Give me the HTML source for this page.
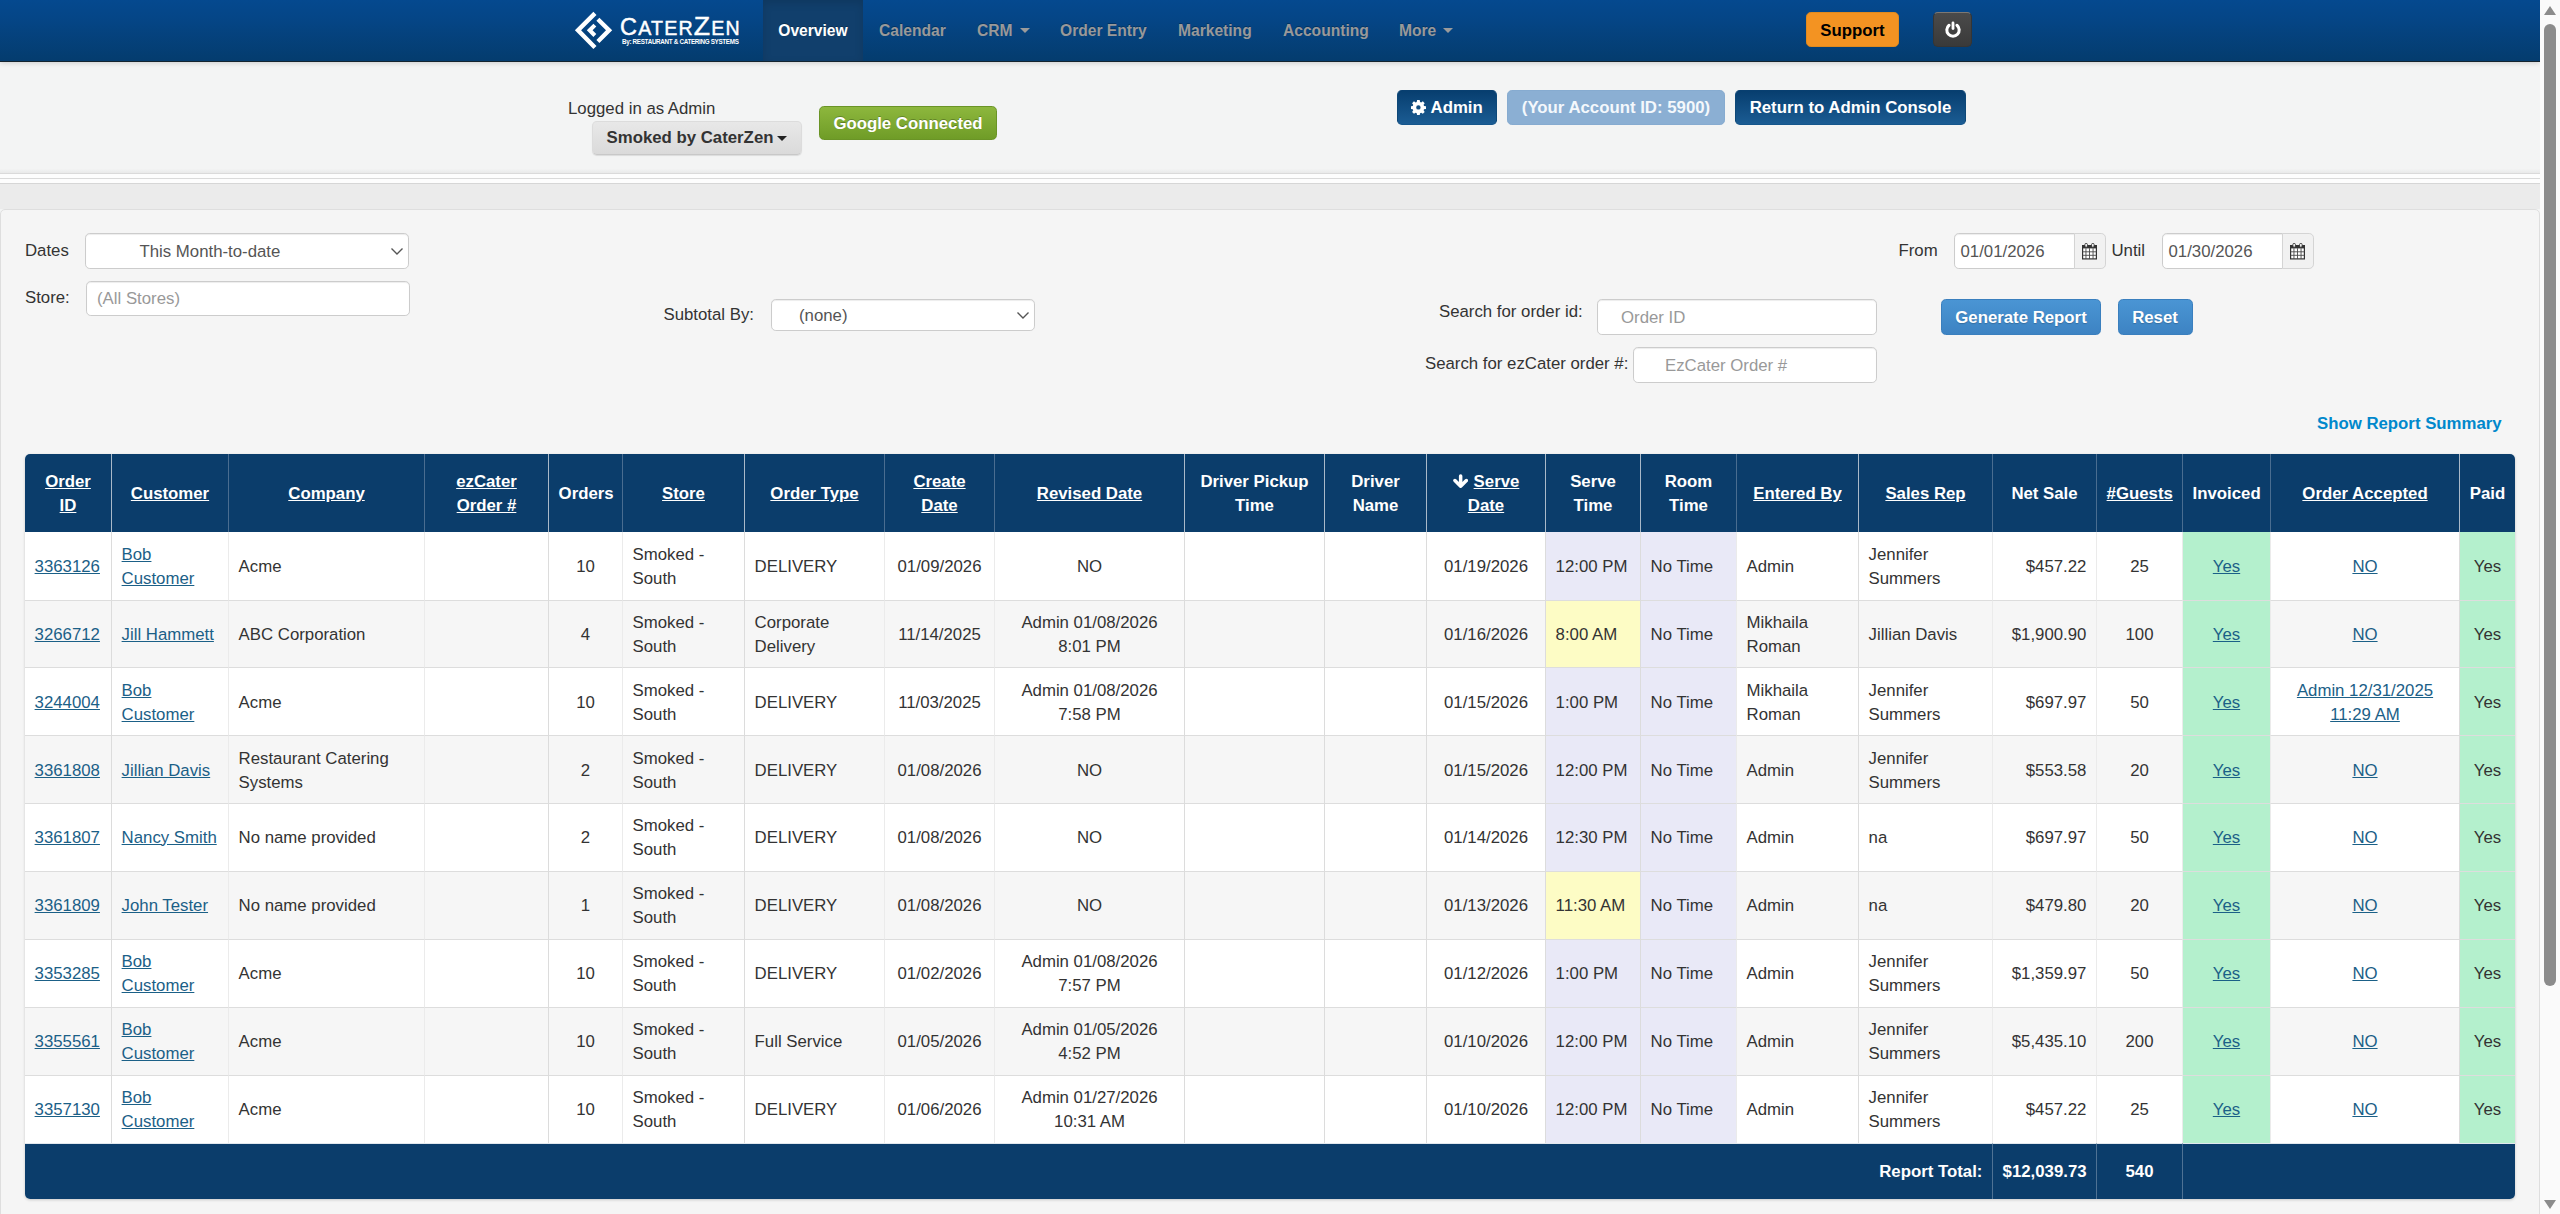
<!DOCTYPE html>
<html lang="en"><head><meta charset="utf-8"><title>CaterZen - Order Report</title>
<style>
*{box-sizing:border-box;margin:0;padding:0}
html,body{width:2560px;height:1214px;overflow:hidden}
body{position:relative;background:#f3f4f4;font-family:"Liberation Sans",Arial,Helvetica,sans-serif;font-size:16.8px;line-height:24px;color:#333}
a{color:#1b6087;text-decoration:underline}
.abs{position:absolute;white-space:nowrap}
#nav{position:absolute;left:0;top:0;width:2540px;height:62px;background:linear-gradient(#05498f 0%,#054585 35%,#043c6e 100%);border-bottom:1px solid #14242f;box-shadow:0 1px 5px rgba(0,0,0,.16);z-index:5}
#nav .it{position:absolute;top:0;height:61px;line-height:62px;font-size:15.6px;font-weight:bold;color:#999;text-shadow:0 -1px 0 rgba(0,0,0,.25);white-space:nowrap}
#nav .act{left:763px;width:100px;background:#113f6c;color:#fff;text-align:center;box-shadow:inset 0 3px 8px rgba(0,0,0,.125)}
.caret{display:inline-block;width:0;height:0;border-left:5.2px solid transparent;border-right:5.2px solid transparent;border-top:5.2px solid #9b9b9b;vertical-align:middle;margin-left:7px;margin-top:-3px}
#logo{position:absolute;left:570px;top:8px;width:46px;height:45px}
#brand{position:absolute;left:620px;top:11.4px;color:#fff;white-space:nowrap;line-height:30px;letter-spacing:1.2px;-webkit-text-stroke:0.45px #fff}
#brand .L{font-size:23.5px}
#brand .Z{font-size:26.7px}
#brand .s{font-size:19.6px}
#by{position:absolute;left:622px;top:36.5px;color:#fff;font-size:6.3px;line-height:9px;white-space:nowrap;letter-spacing:-0.32px;font-weight:bold}
.btn{position:absolute;white-space:nowrap;font-weight:bold;font-size:16.8px;text-align:center;border-radius:4.8px}
#support{left:1806px;top:12px;width:93px;height:35px;line-height:36px;background:#f39322;color:#000;border:1px solid #e08a1e}
#power{left:1933px;top:12px;width:39px;height:35px;background:linear-gradient(#4a4a4a,#3a3a3a);border:1px solid #353535;border-top-color:#7d7873;border-radius:4.8px;position:absolute}
#power svg{position:absolute;left:10px;top:8px;width:18px;height:18px}
#hdr{position:absolute;left:0;top:62px;width:2540px;height:111px;background:linear-gradient(#f3f4f4 96%,#e9e9e9)}
#ln{position:absolute;left:0;top:173px;width:2540px;height:11px;background:#fdfdfd;border-top:1px solid #dadada;border-bottom:1px solid #d6d6d6}
#ln i{position:absolute;left:0;top:4px;width:100%;height:1px;background:#dadada}
#band{position:absolute;left:0;top:184px;width:2540px;height:25px;background:#ebebeb}
#admin{left:1397px;top:90px;width:100px;height:35px;line-height:33px;color:#fff;background:linear-gradient(#073e6f,#1b5c93);border:1px solid #0e4878;border-top-color:#083f70;border-bottom-color:#15568c}
#acct{left:1507px;top:90px;width:218px;height:35px;line-height:33px;color:#f4f8fc;background:#8bafd3;border:1px solid #86abd0}
#ret{left:1735px;top:90px;width:231px;height:35px;line-height:33px;color:#fff;background:linear-gradient(#073e6f,#1b5c93);border:1px solid #0e4878;border-top-color:#083f70;border-bottom-color:#15568c}
#smoked{left:592px;top:121px;width:210px;height:34px;line-height:32px;color:#333;background:linear-gradient(#e8e8e8,#dadada);border:1px solid #dcdcdc;border-bottom-color:#c8c8c8;box-shadow:0 1px 1px rgba(0,0,0,.10)}
#smoked .caret{border-top-color:#222;margin-left:4px;margin-top:0}
#google{left:819px;top:106px;width:178px;height:34px;line-height:34px;color:#fff;background:linear-gradient(#8db73d,#6f9c27);border:1px solid #6a9426;text-shadow:0 -1px 0 rgba(0,0,0,.25)}
#panel{position:absolute;left:0;top:209px;width:2540px;height:1100px;background:#f5f5f5;border:1px solid #dedede;border-radius:5px}
.inp{position:absolute;background:#fff;border:1px solid #ccc;border-radius:4.8px;box-shadow:inset 0 1px 1px rgba(0,0,0,.075);font-size:16.8px;color:#555;white-space:nowrap;overflow:hidden}
.ph{color:#999}
.chev{position:absolute;right:4px;top:50%;margin-top:-4px;width:14px;height:9px}
.addon{position:absolute;background:#f1f1f1;border:1px solid #d4d4d4;border-radius:0 4.8px 4.8px 0}
.addon svg{position:absolute;left:7px;top:9px;width:15px;height:16.500px}
.pbtn{background:linear-gradient(#4a95d4,#3d83c3);border:1px solid #3a7fbe;color:#fff;height:36px;line-height:36px;text-shadow:0 1px 1px rgba(0,0,0,.2)}
#rpt{position:absolute;left:24px;top:244px;border-collapse:separate;border-spacing:0;table-layout:fixed;width:2490px;background:#fff;border-radius:5px;box-shadow:0 1px 3px rgba(0,0,0,.18)}
#rpt th{background:#0b3d6b;color:#fff;font-weight:bold;text-align:center;vertical-align:middle;padding:15.4px 9.6px 13.4px;border-left:1px solid #4a6d90;height:78px;line-height:24px}
#rpt th a{color:#fff}
#rpt th:first-child{border-left:0;border-top-left-radius:5px}
#rpt th:last-child{border-top-right-radius:5px}
#rpt td{padding:10.5px 9.6px 8.5px;border-top:1px solid #ddd;border-left:1px solid #ebebeb;vertical-align:middle;height:68px;line-height:24px}
#rpt td:first-child{border-left:0}
#rpt tbody tr:first-child td{border-top:0}
#rpt tbody tr:nth-child(even) td{background:#f6f6f6}
#rpt tbody tr:nth-child(2) td{height:67px;padding-top:10px;padding-bottom:8px}
#rpt tbody tr:nth-child(n+5) td{padding-top:9.5px;padding-bottom:9.5px}
#rpt th:nth-child(2),#rpt th:nth-child(5),#rpt th:nth-child(7),#rpt th:nth-child(10),#rpt th:nth-child(11),#rpt th:nth-child(12),#rpt th:nth-child(13),#rpt th:nth-child(14),#rpt th:nth-child(16),#rpt th:nth-child(21){border-left-color:#a9b9c9}
#rpt tbody td:nth-child(2),#rpt tbody td:nth-child(5),#rpt tbody td:nth-child(7),#rpt tbody td:nth-child(10),#rpt tbody td:nth-child(11),#rpt tbody td:nth-child(12),#rpt tbody td:nth-child(13),#rpt tbody td:nth-child(14),#rpt tbody td:nth-child(16),#rpt tbody td:nth-child(21){border-left-color:#dcdcdc}
#rpt td.c{text-align:center}
#rpt td.r{text-align:right}
#rpt tbody td.lav, #rpt tbody tr:nth-child(even) td.lav{background:#e9e9f7}
#rpt tbody td.yel, #rpt tbody tr:nth-child(even) td.yel{background:#fdfcc5}
#rpt tbody td.grn, #rpt tbody tr:nth-child(even) td.grn{background:#b4f0cd}
#rpt tfoot td{background:#0b3d6b;color:#fff;font-weight:bold;border-top:1px solid #e2e8ee;border-left:1px solid #4f7294;height:56px;padding:14.4px 9.6px 14.4px}
#rpt tfoot td:first-child{border-left:0;border-bottom-left-radius:5px}
#rpt tfoot td:last-child{border-bottom-right-radius:5px}
.arr{width:15.3px;height:14.2px;vertical-align:-1px;margin-right:1px}
#sb{z-index:10;position:absolute;left:2540px;top:0;width:20px;height:1214px;background:#fafafa}
#sb b{position:absolute;left:4px;top:24px;width:12px;height:962px;border-radius:6px;background:#8b8b8b}
#sb i{position:absolute;left:4px;width:0;height:0;border-left:6px solid transparent;border-right:6px solid transparent}
#sb .up{top:6px;border-bottom:9px solid #8b8b8b}
#sb .dn{top:1200px;border-top:9px solid #8b8b8b}

</style></head>
<body>
<div id="nav">
<svg id="logo" viewBox="570 8 46 45"><g fill="#fff"><polygon points="574.9,30.3 593.4,11.8 596.5,14.9 581.1,30.3 596.5,45.9 593.4,49 "/><polygon points="612.2,30.3 599.4,17.7 596.4,20.8 606,30.3 596.4,40 599.4,43.100"/><polygon points="586.8,30.3 593.4,23.7 596.3,26.600 592.6,30.3 596.3,34 593.4,36.900"/></g></svg>
<div id="brand"><span class="L">C</span><span class="s">ATER</span><span class="Z">Z</span><span class="s">EN</span></div>
<div id="by">By: RESTAURANT &amp; CATERING SYSTEMS</div>
<div class="it act">Overview</div>
<div class="it" style="left:879px">Calendar</div>
<div class="it" style="left:977px">CRM<span class="caret"></span></div>
<div class="it" style="left:1060px">Order Entry</div>
<div class="it" style="left:1178px">Marketing</div>
<div class="it" style="left:1283px">Accounting</div>
<div class="it" style="left:1399px">More<span class="caret"></span></div>
<div class="btn" id="support">Support</div>
<div id="power"><svg viewBox="0 0 16 16"><path d="M8 1.700v5" stroke="#fff" stroke-width="2.500" stroke-linecap="round" fill="none"/><path d="M4.500 3.800A5.500 5.500 0 1 0 11.500 3.800" stroke="#fff" stroke-width="2.700" stroke-linecap="round" fill="none"/></svg></div>
</div>
<div id="hdr"></div>
<div class="abs" style="left:568px;top:97px">Logged in as Admin</div>
<div class="btn" id="smoked">Smoked by CaterZen<span class="caret"></span></div>
<div class="btn" id="google">Google Connected</div>
<div class="btn" id="admin"><svg viewBox="0 0 16 16" style="width:14.8px;height:14.8px;vertical-align:-1.5px;margin-right:4.6px"><path fill="#fff" fill-rule="evenodd" d="M6.6 0h2.8l.4 2.1 1.2.5 1.8-1.2 2 2-1.2 1.8.5 1.2 2.1.4v2.8l-2.1.4-.5 1.2 1.2 1.8-2 2-1.8-1.2-1.2.5-.4 2.1H6.6l-.4-2.1-1.2-.5-1.8 1.2-2-2 1.2-1.8-.5-1.2L-.2 9.600V6.800l2.100-.4.5-1.2L1.200 3.400l2-2 1.800 1.200 1.200-.5zM8 5.600a2.400 2.400 0 1 0 0 4.800 2.400 2.400 0 0 0 0-4.800z"/></svg>Admin</div>
<div class="btn" id="acct">(Your Account ID: 5900)</div>
<div class="btn" id="ret">Return to Admin Console</div>
<div id="ln"><i></i></div>
<div id="band"></div>
<div id="panel">
<div class="abs" style="left:24px;top:29px">Dates</div>
<div class="inp" style="left:84px;top:23px;width:324px;height:36px;line-height:35px;padding-left:53.5px">This Month-to-date<svg class="chev" viewBox="0 0 14 9"><path d="M1.5 1.5L7 7L12.500 1.500" fill="none" stroke="#555" stroke-width="1.35"/></svg></div>
<div class="abs" style="left:24px;top:76px">Store:</div>
<div class="inp" style="left:85px;top:71px;width:324px;height:35px;line-height:33px;padding-left:10px"><span class="ph">(All Stores)</span></div>
<div class="abs" style="left:662.5px;top:92.5px">Subtotal By:</div>
<div class="inp" style="left:770px;top:89px;width:264px;height:32px;line-height:31px;padding-left:27px">(none)<svg class="chev" viewBox="0 0 14 9"><path d="M1.5 1.5L7 7L12.500 1.500" fill="none" stroke="#555" stroke-width="1.35"/></svg></div>
<div class="abs" style="left:1897.500px;top:28.500px">From</div>
<div class="inp" style="left:1953px;top:23px;width:121px;height:36px;line-height:36px;padding-left:5.500px;border-radius:4.8px 0 0 4.8px">01/01/2026</div>
<div class="addon" style="left:2073px;top:23px;width:32px;height:36px"><svg viewBox="0 0 15 16.5"><use href="#cal"/></svg></div>
<div class="abs" style="left:2110.500px;top:28.500px">Until</div>
<div class="inp" style="left:2161px;top:23px;width:121px;height:36px;line-height:36px;padding-left:5.500px;border-radius:4.8px 0 0 4.8px">01/30/2026</div>
<div class="addon" style="left:2281px;top:23px;width:32px;height:36px"><svg viewBox="0 0 15 16.5"><use href="#cal"/></svg></div>
<div class="abs" style="left:1438px;top:90px">Search for order id:</div>
<div class="inp" style="left:1596px;top:89px;width:280px;height:36px;line-height:35px;padding-left:23px"><span class="ph">Order ID</span></div>
<div class="abs" style="left:1424px;top:142px">Search for ezCater order #:</div>
<div class="inp" style="left:1632px;top:137px;width:244px;height:36px;line-height:35px;padding-left:31px"><span class="ph">EzCater Order #</span></div>
<div class="btn pbtn" style="left:1940px;top:89px;width:160px">Generate Report</div>
<div class="btn pbtn" style="left:2116.500px;top:89px;width:75px">Reset</div>
<div class="abs" style="left:2316px;top:202px;color:#0088cc;font-weight:bold">Show Report Summary</div>
<svg width="0" height="0" style="position:absolute"><defs><g id="cal"><rect x=".6" y="2.600" width="13.8" height="13.300" fill="#fff" stroke="#333" stroke-width="1.200"/><rect x="0" y="2" width="15" height="3.400" fill="#333"/><path d="M3.950 5.200V16M7.500 5.200V16M11.050 5.200V16M.6 8.800H14.400M.6 12.300H14.400" stroke="#4a4a4a" stroke-width=".9" fill="none"/><rect x="2.900" y=".4" width="2.500" height="3.900" rx="1.200" fill="#fff" stroke="#333" stroke-width=".9"/><rect x="9.600" y=".4" width="2.500" height="3.900" rx="1.200" fill="#fff" stroke="#333" stroke-width=".9"/></g></defs></svg>
<table id="rpt"><colgroup><col style="width:86px"><col style="width:117px"><col style="width:196px"><col style="width:124px"><col style="width:74px"><col style="width:122px"><col style="width:140px"><col style="width:110px"><col style="width:190px"><col style="width:140px"><col style="width:102px"><col style="width:119px"><col style="width:95px"><col style="width:96px"><col style="width:122px"><col style="width:134px"><col style="width:104px"><col style="width:86px"><col style="width:88px"><col style="width:189px"><col style="width:56px"></colgroup>
<thead><tr><th><a>Order ID</a></th><th><a>Customer</a></th><th><a>Company</a></th><th><a>ezCater Order #</a></th><th>Orders</th><th><a>Store</a></th><th><a>Order Type</a></th><th><a>Create Date</a></th><th><a>Revised Date</a></th><th>Driver Pickup Time</th><th>Driver Name</th><th><svg class="arr" viewBox="0 0 15.3 14.2"><path d="M7.65 1.9V11M1.95 6.5L7.65 12.2L13.35 6.5" fill="none" stroke="#fff" stroke-width="3.500" stroke-linecap="round" stroke-linejoin="round"/></svg> <a>Serve Date</a></th><th>Serve Time</th><th>Room Time</th><th><a>Entered By</a></th><th><a>Sales Rep</a></th><th>Net Sale</th><th><a>#Guests</a></th><th>Invoiced</th><th><a>Order Accepted</a></th><th>Paid</th></tr></thead>
<tbody>
<tr><td><a>3363126</a></td><td><a>Bob Customer</a></td><td>Acme</td><td></td><td class="c">10</td><td>Smoked - South</td><td>DELIVERY</td><td class="c">01/09/2026</td><td class="c">NO</td><td></td><td></td><td class="c">01/19/2026</td><td class="lav">12:00 PM</td><td class="lav">No Time</td><td>Admin</td><td>Jennifer Summers</td><td class="r">$457.22</td><td class="c">25</td><td class="c grn"><a>Yes</a></td><td class="c"><a>NO</a></td><td class="c grn">Yes</td></tr>
<tr><td><a>3266712</a></td><td><a>Jill Hammett</a></td><td>ABC Corporation</td><td></td><td class="c">4</td><td>Smoked - South</td><td>Corporate Delivery</td><td class="c">11/14/2025</td><td class="c">Admin 01/08/2026 8:01 PM</td><td></td><td></td><td class="c">01/16/2026</td><td class="yel">8:00 AM</td><td class="lav">No Time</td><td>Mikhaila Roman</td><td>Jillian Davis</td><td class="r">$1,900.90</td><td class="c">100</td><td class="c grn"><a>Yes</a></td><td class="c"><a>NO</a></td><td class="c grn">Yes</td></tr>
<tr><td><a>3244004</a></td><td><a>Bob Customer</a></td><td>Acme</td><td></td><td class="c">10</td><td>Smoked - South</td><td>DELIVERY</td><td class="c">11/03/2025</td><td class="c">Admin 01/08/2026 7:58 PM</td><td></td><td></td><td class="c">01/15/2026</td><td class="lav">1:00 PM</td><td class="lav">No Time</td><td>Mikhaila Roman</td><td>Jennifer Summers</td><td class="r">$697.97</td><td class="c">50</td><td class="c grn"><a>Yes</a></td><td class="c"><a>Admin 12/31/2025 11:29 AM</a></td><td class="c grn">Yes</td></tr>
<tr><td><a>3361808</a></td><td><a>Jillian Davis</a></td><td>Restaurant Catering Systems</td><td></td><td class="c">2</td><td>Smoked - South</td><td>DELIVERY</td><td class="c">01/08/2026</td><td class="c">NO</td><td></td><td></td><td class="c">01/15/2026</td><td class="lav">12:00 PM</td><td class="lav">No Time</td><td>Admin</td><td>Jennifer Summers</td><td class="r">$553.58</td><td class="c">20</td><td class="c grn"><a>Yes</a></td><td class="c"><a>NO</a></td><td class="c grn">Yes</td></tr>
<tr><td><a>3361807</a></td><td><a>Nancy Smith</a></td><td>No name provided</td><td></td><td class="c">2</td><td>Smoked - South</td><td>DELIVERY</td><td class="c">01/08/2026</td><td class="c">NO</td><td></td><td></td><td class="c">01/14/2026</td><td class="lav">12:30 PM</td><td class="lav">No Time</td><td>Admin</td><td>na</td><td class="r">$697.97</td><td class="c">50</td><td class="c grn"><a>Yes</a></td><td class="c"><a>NO</a></td><td class="c grn">Yes</td></tr>
<tr><td><a>3361809</a></td><td><a>John Tester</a></td><td>No name provided</td><td></td><td class="c">1</td><td>Smoked - South</td><td>DELIVERY</td><td class="c">01/08/2026</td><td class="c">NO</td><td></td><td></td><td class="c">01/13/2026</td><td class="yel">11:30 AM</td><td class="lav">No Time</td><td>Admin</td><td>na</td><td class="r">$479.80</td><td class="c">20</td><td class="c grn"><a>Yes</a></td><td class="c"><a>NO</a></td><td class="c grn">Yes</td></tr>
<tr><td><a>3353285</a></td><td><a>Bob Customer</a></td><td>Acme</td><td></td><td class="c">10</td><td>Smoked - South</td><td>DELIVERY</td><td class="c">01/02/2026</td><td class="c">Admin 01/08/2026 7:57 PM</td><td></td><td></td><td class="c">01/12/2026</td><td class="lav">1:00 PM</td><td class="lav">No Time</td><td>Admin</td><td>Jennifer Summers</td><td class="r">$1,359.97</td><td class="c">50</td><td class="c grn"><a>Yes</a></td><td class="c"><a>NO</a></td><td class="c grn">Yes</td></tr>
<tr><td><a>3355561</a></td><td><a>Bob Customer</a></td><td>Acme</td><td></td><td class="c">10</td><td>Smoked - South</td><td>Full Service</td><td class="c">01/05/2026</td><td class="c">Admin 01/05/2026 4:52 PM</td><td></td><td></td><td class="c">01/10/2026</td><td class="lav">12:00 PM</td><td class="lav">No Time</td><td>Admin</td><td>Jennifer Summers</td><td class="r">$5,435.10</td><td class="c">200</td><td class="c grn"><a>Yes</a></td><td class="c"><a>NO</a></td><td class="c grn">Yes</td></tr>
<tr><td><a>3357130</a></td><td><a>Bob Customer</a></td><td>Acme</td><td></td><td class="c">10</td><td>Smoked - South</td><td>DELIVERY</td><td class="c">01/06/2026</td><td class="c">Admin 01/27/2026 10:31 AM</td><td></td><td></td><td class="c">01/10/2026</td><td class="lav">12:00 PM</td><td class="lav">No Time</td><td>Admin</td><td>Jennifer Summers</td><td class="r">$457.22</td><td class="c">25</td><td class="c grn"><a>Yes</a></td><td class="c"><a>NO</a></td><td class="c grn">Yes</td></tr>
</tbody>
<tfoot><tr><td colspan="16" class="r">Report Total:</td><td class="r">$12,039.73</td><td class="c">540</td><td colspan="3"></td></tr></tfoot>
</table>
</div>
<div id="sb"><i class="up"></i><b></b><i class="dn"></i></div>
</body></html>
